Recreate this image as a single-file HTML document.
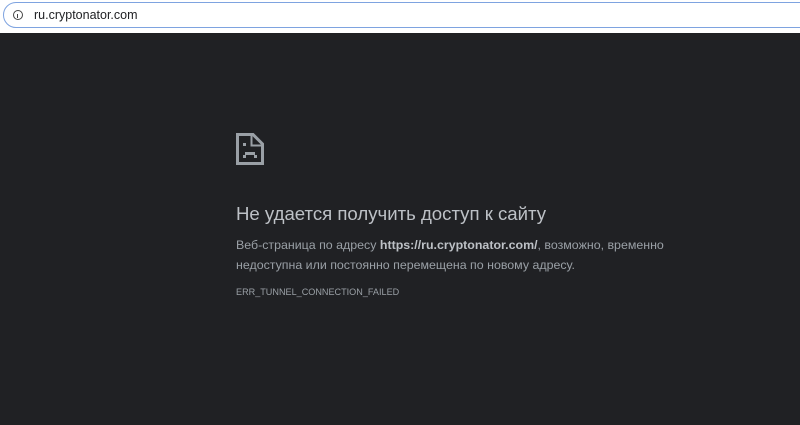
<!DOCTYPE html>
<html><head><meta charset="utf-8"><style>
html,body{margin:0;padding:0;width:800px;height:425px;overflow:hidden;background:#202124;font-family:"Liberation Sans","DejaVu Sans",sans-serif}
.top{position:absolute;left:0;top:0;width:800px;height:33px;background:#fff}
.bar{position:absolute;left:3px;top:2px;width:820px;height:26px;border:1.5px solid #7ea3e0;border-radius:14px;box-sizing:border-box}
.url{position:absolute;left:34px;top:8px;font-size:12.5px;color:#202124}
.info{position:absolute;left:13px;top:10px;width:10px;height:10px;border:1.3px solid #444;border-radius:50%;box-sizing:border-box}
.info:after{content:"";position:absolute;left:3px;top:2.5px;width:1.3px;height:4px;background:#444}
.t{position:absolute;left:236px;top:203px;font-size:18.6px;color:#bdc1c6;white-space:nowrap}
.p{position:absolute;left:236px;font-size:12.4px;color:#9aa0a6;white-space:nowrap}
.p b{color:#bdc1c6}
.e{position:absolute;left:236px;top:287px;font-size:9.1px;color:#9aa0a6}
</style></head><body>
<div class="top"><div class="bar"></div><div class="info"></div><div class="url">ru.cryptonator.com</div></div>
<svg style="position:absolute;left:236px;top:133px" width="28" height="32" viewBox="0 0 28 32" fill="none" stroke="#9aa0a6" stroke-width="3">
<path d="M1.5 1.5H17L26.5 11V30.5H1.5Z"/><path d="M15.5 1.5V12.5H26.5" stroke-width="2"/>
<rect x="7" y="10" width="3" height="3" fill="#9aa0a6" stroke="none"/>
<rect x="7" y="22" width="3" height="3" fill="#9aa0a6" stroke="none"/>
<rect x="9" y="19" width="10" height="3" fill="#9aa0a6" stroke="none"/>
<rect x="18" y="22" width="3" height="3" fill="#9aa0a6" stroke="none"/>
</svg>
<div class="t">Не удается получить доступ к сайту</div>
<div class="p" style="top:238px">Веб-страница по адресу <b>https://ru.cryptonator.com/</b>, возможно, временно</div>
<div class="p" style="top:258px">недоступна или постоянно перемещена по новому адресу.</div>
<div class="e">ERR_TUNNEL_CONNECTION_FAILED</div>
</body></html>
